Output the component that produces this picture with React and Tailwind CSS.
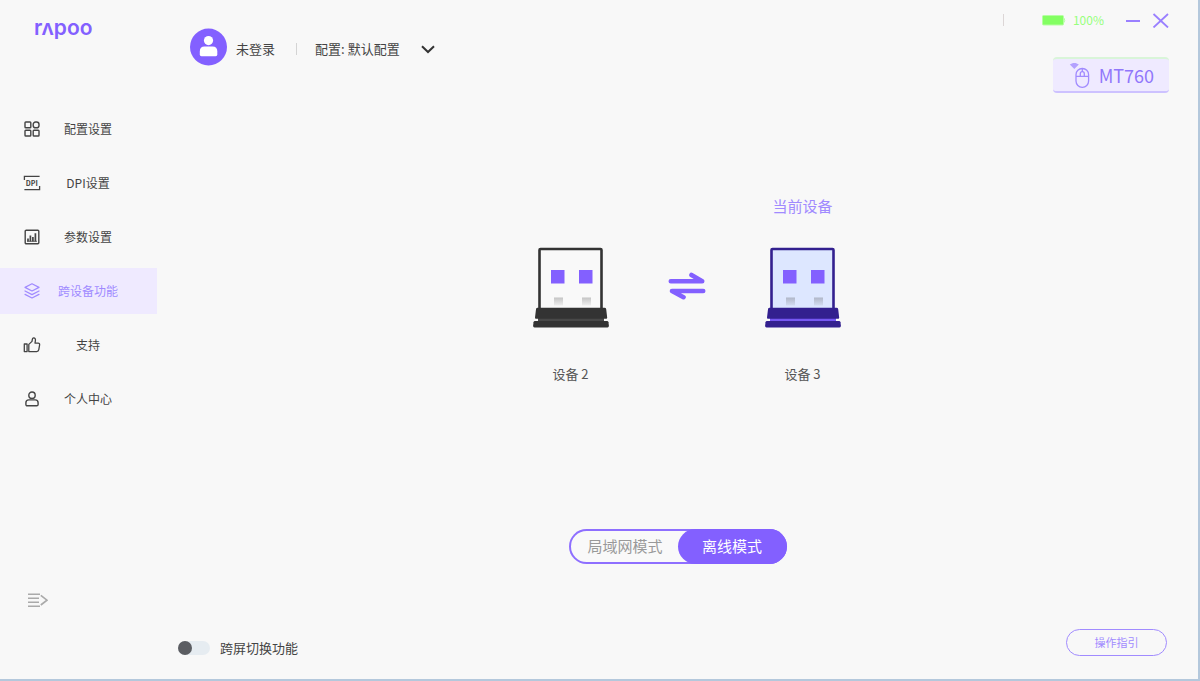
import { useState } from 'react'

const GridIcon = () => (
  <svg width="16" height="16" viewBox="0 0 16 16" fill="none" stroke="currentColor" strokeWidth="1.4">
    <rect x="1" y="1" width="5.8" height="5.8" rx=".8" />
    <rect x="9.2" y="1" width="5.8" height="5.8" rx="2.4" />
    <rect x="1" y="9.2" width="5.8" height="5.8" rx=".8" />
    <rect x="9.2" y="9.2" width="5.8" height="5.8" rx=".8" />
  </svg>
)

const DpiIcon = () => (
  <svg width="16" height="16" viewBox="0 0 16 16" fill="none" stroke="currentColor" strokeWidth="1.3" className="overflow-visible">
    <path d="M.4 5V1.4H15.6" />
    <path d="M.4 14.6H15.6V11" />
    <text x="7.8" y="10.6" textAnchor="middle" fontSize="7" fontWeight="700" fill="currentColor" stroke="none">DPI</text>
  </svg>
)

const ChartIcon = () => (
  <svg width="16" height="16" viewBox="0 0 16 16" fill="none" stroke="currentColor">
    <rect x="1.2" y="1.2" width="13.6" height="13.6" rx="1" strokeWidth="1.4" />
    <path d="M4 12.6V9.4M6.4 12.6V6.6M8.9 12.6V8M11.4 12.6V4.2" strokeWidth="1.7" />
    <path d="M3 12.3h10" strokeWidth=".8" />
  </svg>
)

const LayersIcon = () => (
  <svg width="16" height="16" viewBox="0 0 16 16" fill="none" stroke="currentColor" strokeWidth="1.2" strokeLinejoin="round" strokeLinecap="round">
    <path d="M8 .8 15 4.4 8 8 1 4.4Z" />
    <path d="M1 8 8 11.6 15 8" />
    <path d="M1 11.4 8 15l7-3.6" />
  </svg>
)

const ThumbIcon = () => (
  <svg width="16" height="16" viewBox="0 0 16 16" fill="none" stroke="currentColor" strokeWidth="1.3" strokeLinejoin="round" className="overflow-visible">
    <path d="M.3 7h2.8v7.6H.3Z" />
    <path d="M4.8 14.6V7.4L8 4.4C8.3 3.4 8 .9 9.7.9c1.5 0 1.9 1.5 1.7 2.7L11 6.2h3.1c1.2 0 1.7.7 1.5 1.8l-.8 4.7c-.2 1.2-.9 1.9-2.1 1.9Z" />
  </svg>
)

const PersonIcon = () => (
  <svg width="16" height="16" viewBox="0 0 16 16" fill="none" stroke="currentColor" strokeWidth="1.4">
    <circle cx="8" cy="4.2" r="3.2" />
    <path d="M4.8 8.9h6.4c1.7 0 2.9 1.2 2.9 2.9v1.6c0 .9-.5 1.4-1.4 1.4H3.3c-.9 0-1.4-.5-1.4-1.4v-1.6c0-1.7 1.2-2.9 2.9-2.9Z" />
  </svg>
)

const MENU = [
  { id: 'config',  label: '配置设置',   icon: GridIcon },
  { id: 'dpi',     label: 'DPI设置',    icon: DpiIcon },
  { id: 'params',  label: '参数设置',   icon: ChartIcon },
  { id: 'cross',   label: '跨设备功能', icon: LayersIcon },
  { id: 'support', label: '支持',       icon: ThumbIcon },
  { id: 'me',      label: '个人中心',   icon: PersonIcon },
]

const MODES = [
  { id: 'lan',     label: '局域网模式' },
  { id: 'offline', label: '离线模式' },
]

const Receiver = ({ active }) => {
  const dark = active ? '#33208f' : '#333333'
  const fade = active ? 'pinActive' : 'pin'
  return (
    <svg width="76" height="81" viewBox="0 0 76 81">
      <defs>
        <linearGradient id={fade} x1="0" y1="0" x2="0" y2="1">
          <stop offset="0" stopColor={active ? '#b0b7c8' : '#c4c4c4'} />
          <stop offset="1" stopColor={active ? '#d3dcf2' : '#efefef'} />
        </linearGradient>
      </defs>
      <rect x="6.5" y="2" width="62" height="65" rx="1" fill={active ? '#dde7ff' : '#f9f9f9'} stroke={dark} strokeWidth="2.6" />
      <rect x="18" y="23" width="13.5" height="13.5" fill="#8360ff" />
      <rect x="46" y="23" width="13.5" height="13.5" fill="#8360ff" />
      <rect x="21" y="50.5" width="9" height="8" fill={`url(#${fade})`} />
      <rect x="49" y="50.5" width="9" height="8" fill={`url(#${fade})`} />
      <path d="M5 67h66v10H5z" fill={active ? '#7657f2' : '#484848'} />
      <path d="M4.5 60.8h67q1.5 0 1.7 1.4l1 8.6q.1 1-1 1H3q-1.2 0-1-1.2l1-8.4q.2-1.4 1.5-1.4Z" fill={dark} />
      <path d="M2 74h72q1.2 0 1.5 1.3l.4 3.5q.1 1.7-1.4 1.7H1.5q-1.5 0-1.4-1.7l.4-3.5Q.8 74 2 74Z" fill={dark} />
    </svg>
  )
}

const SwapIcon = () => (
  <svg width="38" height="28" viewBox="0 0 38 28" fill="none" stroke="#8360ff" strokeWidth="4.6" strokeLinecap="round" strokeLinejoin="round">
    <path d="M2.8 9.2h31.4L23.5 3" />
    <path d="M35.2 19H4l11.5 6.2" />
  </svg>
)

const MouseIcon = () => (
  <svg width="22" height="27" viewBox="0 0 22 27" fill="none" stroke="#a18bff" strokeWidth="1.3">
    <path d="M.8 2.6C3.3.3 7.4.3 9.8 2.6L5.3 7Z" fill="#b3a1ff" stroke="none" />
    <rect x="7" y="6.5" width="12.6" height="18.8" rx="6.2" />
    <path d="M7 14.3h12.6M11.3 14.3v-2.6a2 2 0 0 1 4 0v2.6" />
    <path d="M13.3 6.5v3.4" />
  </svg>
)

export default function App() {
  const [page, setPage]               = useState('cross')
  const [mode, setMode]               = useState('offline')
  const [crossScreen, setCrossScreen] = useState(false)

  return (
    <div className="flex min-h-screen border-r-2 border-b-2 border-[#b4c8dc] bg-[#f8f8f8] font-['Noto_Sans_CJK_SC',sans-serif] text-[#333]">
      <aside className="flex w-[157px] shrink-0 flex-col">
        <a href="#home" aria-label="rapoo" className="ml-[34px] mt-[14px] h-7 self-start font-['Inter',sans-serif] text-[21px] font-semibold leading-7 text-[#8360ff]">rʌpoo</a>

        <nav className="mt-16 flex flex-col gap-2">
          {MENU.map(({ id, label, icon: Icon }) => (
            <button key={id} type="button" onClick={() => setPage(id)}
              className={`flex h-[46px] w-full items-center pl-6 text-xs
                ${page === id ? 'bg-[#efeaff] text-[#a08aff]' : 'text-[#444]'}`}>
              <Icon />
              <span className="w-24 text-center">{label}</span>
            </button>
          ))}
        </nav>

        <button type="button" aria-label="展开菜单" className="mb-[70px] ml-7 mt-auto self-start text-[#aaa]">
          <svg width="20" height="18" viewBox="0 0 20 18" fill="none" stroke="currentColor" strokeWidth="1.4">
            <path d="M0 3.2h12M0 7.2h11M0 11.2h11M0 15.2h12" />
            <path d="M12.8 4.4 19 9.2l-6.2 4.8" strokeWidth="1.7" />
          </svg>
        </button>
      </aside>

      <main className="flex flex-1 flex-col">
        <header className="flex items-start justify-between pl-[33px] pr-[29px]">
          <div className="mt-7 flex items-center text-[13px] text-[#444]">
            <svg width="38" height="38" viewBox="0 0 38 38">
              <circle cx="18.5" cy="19" r="18.5" fill="#8360ff" />
              <circle cx="18.5" cy="12.6" r="4.6" fill="#fff" />
              <path d="M14.5 18.6h8q4.8 0 4.8 5v3q0 1.6-1.6 1.6H11.4q-1.6 0-1.6-1.6v-3q0-5 4.7-5Z" fill="#fff" />
            </svg>
            <div className="flex items-center pl-2 pt-1">
              <button type="button">未登录</button>
              <span className="ml-[21px] h-3 w-px bg-[#d4d4d4]" />
              <label htmlFor="profile" className="ml-[18px]">配置:</label>
              <div className="relative ml-[3px] flex items-center">
                <select id="profile" defaultValue="default" className="appearance-none bg-transparent pr-[34px]">
                  <option value="default">默认配置</option>
                </select>
                <svg width="14" height="9" viewBox="0 0 14 9" fill="none" stroke="#333" strokeWidth="2" className="pointer-events-none absolute right-0">
                  <path d="M1 1.2 7 7l6-5.8" />
                </svg>
              </div>
            </div>
          </div>

          <div className="flex flex-col items-end">
            <div className="flex h-10 items-center">
              <span className="mr-[38px] h-3 w-px bg-[#dcd6d6]" />
              <svg width="24" height="11" viewBox="0 0 24 11">
                <rect x=".5" y=".5" width="21" height="9.5" rx="1" fill="#83ff62" stroke="#b5ffa2" />
                <path d="M22 3q1.5 2.3 0 4.6" fill="none" stroke="#b5ffa2" />
              </svg>
              <span className="ml-[7px] text-xs text-[#97ff7c]">100%</span>
              <button type="button" aria-label="最小化" className="ml-[22px]">
                <svg width="14" height="16" viewBox="0 0 14 16" stroke="#9a80ff" strokeWidth="2">
                  <path d="M0 9h14" />
                </svg>
              </button>
              <button type="button" aria-label="关闭" className="ml-3">
                <svg width="17" height="16" viewBox="0 0 17 16" stroke="#9a80ff" strokeWidth="1.8">
                  <path d="M1.5 2 16 15.5M16 2 1.5 15.5" />
                </svg>
              </button>
            </div>
            <button type="button" className="mt-[17px] flex h-9 items-center gap-2 rounded border-b-2 border-t-2 border-b-[#cdc2ff] border-t-[#d9f5d9] bg-[#efeaff] pl-4 pr-[15px] text-[18px] text-[#9177fb]">
              <MouseIcon />
              MT760
            </button>
          </div>
        </header>

        <section className="flex flex-col items-center pt-[101px]">
          <div className="flex items-center gap-[59px] pl-[18px]">
            {[2, 3].map(n => (
              <div key={n} className={`flex w-[76px] flex-col items-center ${n === 3 ? 'order-3' : 'order-1'}`}>
                <p className="h-6 text-[15px] leading-6 text-[#a08aff]">{n === 3 && '当前设备'}</p>
                <div className="mb-[34px] mt-[29px]">
                  <Receiver active={n === 3} />
                </div>
                <p className="text-[13px] leading-6 text-[#555]">设备 {n}</p>
              </div>
            ))}
            <button type="button" aria-label="切换设备" className="order-2 pb-2">
              <SwapIcon />
            </button>
          </div>

          <div className="mt-[143px] flex h-[35px] rounded-full bg-[#f9f9f9] ring-2 ring-inset ring-[#8e6fff]">
            {MODES.map(m => (
              <button key={m.id} type="button" aria-pressed={mode === m.id} onClick={() => setMode(m.id)}
                className={`w-[109px] rounded-full text-[15px]
                  ${mode === m.id ? 'bg-[#8360ff] text-white' : 'pl-1 text-[#999]'}`}>
                {m.label}
              </button>
            ))}
          </div>
        </section>

        <footer className="mt-auto flex items-center justify-between pb-[21px] pl-[21px] pr-[31px]">
          <label className="relative flex items-center gap-[10px] pt-3 text-[13px] leading-5 text-[#444]">
            <input type="checkbox" checked={crossScreen} onChange={e => setCrossScreen(e.target.checked)} className="peer sr-only" />
            <span className="flex h-[14px] w-8 items-center rounded-full bg-[#e6ecf1] peer-checked:justify-end peer-checked:bg-[#8360ff]">
              <span className="size-[14px] rounded-full bg-[#5b5d62]" />
            </span>
            跨屏切换功能
          </label>
          <button type="button" className="h-[27px] w-[101px] rounded-full border border-[#a18bff] text-[11px] text-[#a18bff]">
            操作指引
          </button>
        </footer>
      </main>
    </div>
  )
}
